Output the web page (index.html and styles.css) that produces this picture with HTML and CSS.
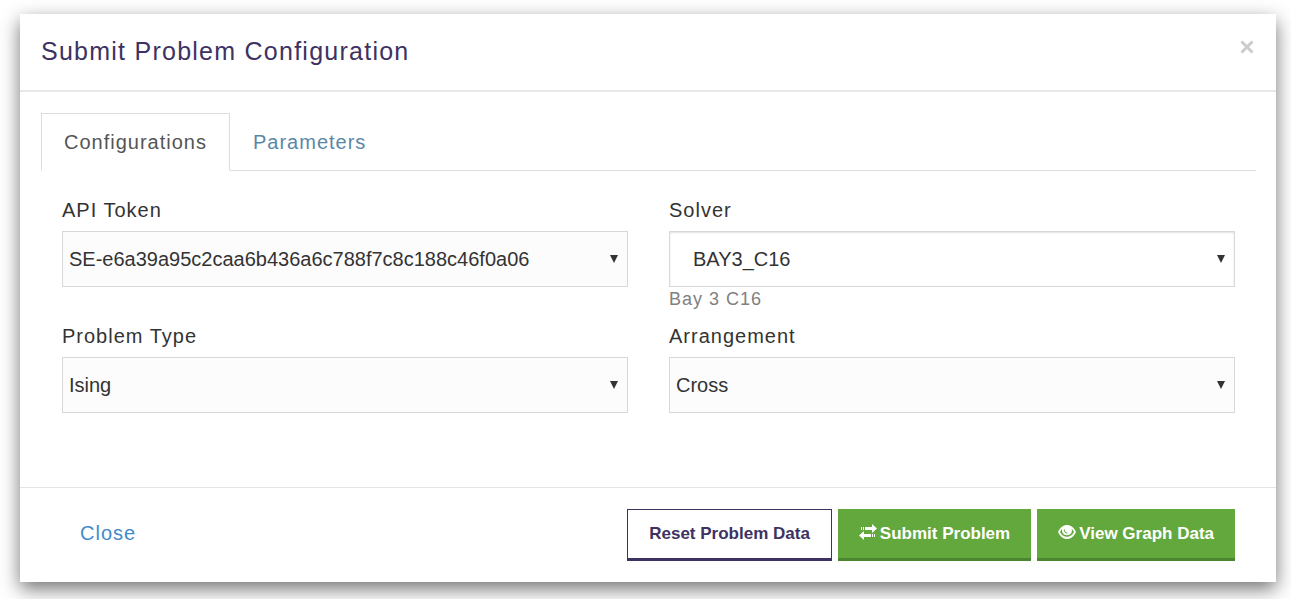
FILE: index.html
```html
<!DOCTYPE html>
<html lang="en">
<head>
<meta charset="utf-8">
<meta name="viewport" content="width=device-width, initial-scale=1">
<title>Submit Problem Configuration</title>
<link rel="stylesheet" href="styles.css">
</head>
<body>
<form class="modal" role="dialog" aria-labelledby="modal-title">
  <header class="modal-header">
    <h1 class="modal-title" id="modal-title">Submit Problem Configuration</h1>
    <button class="modal-dismiss" type="button" aria-label="Dismiss">
      <svg viewBox="0 0 14 14" aria-hidden="true"><path d="M1.500 1.500 12.500 12.500M12.500 1.500 1.500 12.500"/></svg>
    </button>
  </header>
  <div class="modal-body">
    <nav class="tabs">
      <a class="tab tab-active" href="#configurations">Configurations</a>
      <a class="tab" href="#parameters">Parameters</a>
    </nav>
    <div class="fields" id="configurations">
      <div class="field">
        <label class="field-label" for="token">API Token</label>
        <div class="select-wrap">
          <select class="select" id="token"><option>SE-e6a39a95c2caa6b436a6c788f7c8c188c46f0a06</option></select>
          <svg class="arrow" viewBox="0 0 8 8" aria-hidden="true"><path d="M0 0h8L4 8z"/></svg>
        </div>
      </div>
      <div class="field">
        <label class="field-label" for="solver">Solver</label>
        <div class="select-wrap">
          <select class="select select-solver" id="solver" aria-describedby="solver-help"><option>BAY3_C16</option></select>
          <svg class="arrow" viewBox="0 0 8 8" aria-hidden="true"><path d="M0 0h8L4 8z"/></svg>
        </div>
        <span class="field-help" id="solver-help">Bay 3 C16</span>
      </div>
      <div class="field">
        <label class="field-label" for="type">Problem Type</label>
        <div class="select-wrap">
          <select class="select" id="type"><option>Ising</option></select>
          <svg class="arrow" viewBox="0 0 8 8" aria-hidden="true"><path d="M0 0h8L4 8z"/></svg>
        </div>
      </div>
      <div class="field">
        <label class="field-label" for="arrangement">Arrangement</label>
        <div class="select-wrap">
          <select class="select" id="arrangement"><option>Cross</option></select>
          <svg class="arrow" viewBox="0 0 8 8" aria-hidden="true"><path d="M0 0h8L4 8z"/></svg>
        </div>
      </div>
    </div>
  </div>
  <footer class="modal-footer">
    <a class="close-link" href="#close">Close</a>
    <div class="actions">
      <button class="button button-outline" type="reset">Reset Problem Data</button>
      <button class="button button-green" type="submit">
        <svg class="icon" viewBox="0 0 18 16" aria-hidden="true"><path d="M2 3h1v3H2zM4 3h1v3H4zM6 3h7V0l5 4.500L13 9V6H6zM16 10h-1v3h1zM14 10h-1v3h1zM12 10H5V7l-5 4.500L5 16V13h7z"/></svg>
        Submit Problem
      </button>
      <button class="button button-green" type="button">
        <svg class="icon" viewBox="0 0 18 16" aria-hidden="true"><path d="M0 8C2 3.500 5.500 1 9 1s7 2.500 9 7c-2 4.500-5.500 7-9 7S2 12.500 0 8z"/><path class="icon-cut" d="M4.300 4.800C3.300 5.600 2.500 6.700 2 8c1 2 3.500 4.800 7 4.800S15 10 16 8c-.5-1.300-1.300-2.400-2.300-3.200.9 3.500-.8 6.400-4.700 6.400S3.400 8.300 4.300 4.800z"/><path class="icon-glint" d="M6.500 5.500A2.700 2.700 0 0 0 9.500 9"/></svg>
        View Graph Data
      </button>
    </div>
  </footer>
</form>
</body>
</html>
```
FILE: styles.css
```css
* {
  box-sizing: border-box;
}

body {
  margin: 0;
  padding: 14px 15px 17px 20px;
  background: #fff;
  color: #333;
  font-family: "Liberation Sans", Arial, sans-serif;
  font-size: 20px;
  line-height: 30px;
  letter-spacing: 1px;
}

.modal {
  background: #fff;
  box-shadow: 0 7px 18px rgba(0, 0, 0, 0.55);
}

.modal-header {
  display: flex;
  justify-content: space-between;
  align-items: flex-start;
  padding: 19px 20px 21px 21px;
  border-bottom: 2px solid #e8e8e8;
}

.modal-title {
  margin: 0;
  color: #3d3261;
  font-size: 25px;
  font-weight: 400;
  line-height: 36px;
  letter-spacing: 0.05em;
}

.modal-dismiss {
  display: flex;
  margin: 7px 2px 0 0;
  padding: 0;
  border: 0;
  background: none;
  cursor: pointer;
}

.modal-dismiss svg {
  width: 14px;
  height: 14px;
  fill: none;
  stroke: #ccc;
  stroke-width: 3;
}

.modal-body {
  padding: 21px 20px 74px 21px;
}

.tabs {
  display: flex;
  border-bottom: 1px solid #ddd;
}

.tab {
  margin-bottom: -1px;
  padding: 13px 22px;
  border: 1px solid transparent;
  color: #5b87a6;
  text-decoration: none;
}

.tab-active {
  border-color: #ddd #ddd #fff;
  background: #fff;
  color: #555;
}

.fields {
  display: grid;
  grid-template-columns: 1fr 1fr;
  gap: 10px 41px;
  padding: 24px 21px 0;
}

.field {
  display: flex;
  flex-direction: column;
}

.field-label {
  margin-bottom: 6px;
}

.select-wrap {
  position: relative;
}

.select {
  display: block;
  appearance: none;
  width: 100%;
  height: 56px;
  padding: 0 30px 0 6px;
  border: 1px solid #d8d8d8;
  border-radius: 0;
  background: #fcfcfc;
  color: #333;
  font: inherit;
}

.select-solver {
  padding-left: 23px;
  background: #fff;
  box-shadow: inset 0 1px 2px rgba(0, 0, 0, 0.12);
}

.arrow {
  position: absolute;
  top: 24px;
  right: 10px;
  width: 8px;
  height: 8px;
  fill: #333;
  pointer-events: none;
}

.field-help {
  color: #808080;
  font-size: 18px;
  line-height: 24px;
}

.modal-footer {
  display: flex;
  justify-content: space-between;
  align-items: center;
  padding: 21px 41px 21px 60px;
  border-top: 1px solid #e5e5e5;
}

.close-link {
  padding-bottom: 4px;
  color: #428bca;
  text-decoration: none;
}

.actions {
  display: flex;
  gap: 6px;
}

.button {
  display: flex;
  align-items: center;
  gap: 3px;
  height: 52px;
  padding: 0 21px;
  border: 0;
  font-family: inherit;
  font-size: 17px;
  font-weight: 700;
  cursor: pointer;
}

.button-outline {
  border: 1px solid #3d3261;
  border-bottom-width: 3px;
  background: #fff;
  color: #3d3261;
}

.button-green {
  border-bottom: 3px solid #4c8530;
  background: #63a83c;
  color: #fff;
}

.icon {
  width: 18px;
  height: 16px;
  margin-bottom: 4px;
  fill: currentColor;
}

.icon-cut {
  fill: #63a83c;
}

.icon-glint {
  fill: none;
  stroke: #63a83c;
  stroke-width: 1;
}
```
